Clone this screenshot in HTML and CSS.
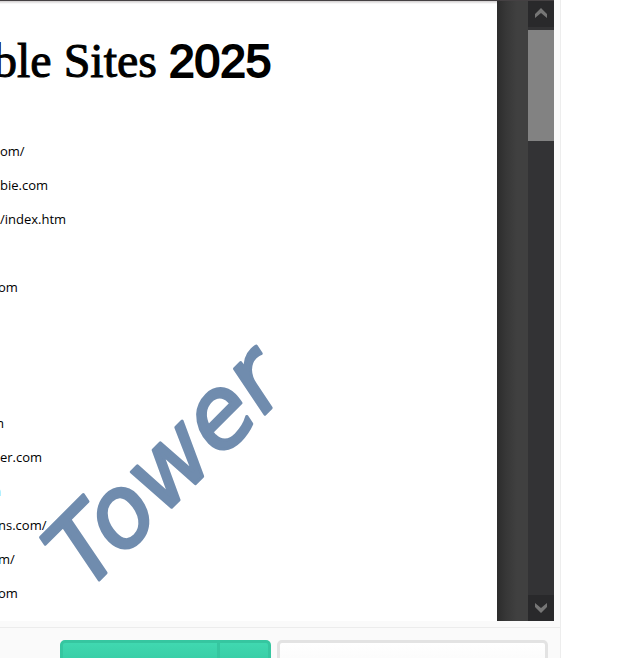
FILE: index.html
```
<!DOCTYPE html>
<html lang="en">
<head>
    <meta charset="UTF-8">
    <meta name="viewport" content="width=device-width, initial-scale=1.0">
    <title>Sites 2025</title>
    <link rel="stylesheet" href="styles.css">
</head>
<body>
    <div class="panel">
        <div class="viewer">
            <main class="page">
                <h1>ble Sites <span class="year">2025</span></h1>
                <ul class="sites">
                    <li>om/</li>
                    <li>bie.com</li>
                    <li>/index.htm</li>
                    <li></li>
                    <li class="cut">om</li>
                    <li></li>
                    <li></li>
                    <li></li>
                    <li class="cut-more">m</li>
                    <li>er.com</li>
                    <li class="cut-most"><a href="#">m</a></li>
                    <li class="cut">ns.com/</li>
                    <li class="cut">m/</li>
                    <li class="cut">om</li>
                </ul>
                <svg class="watermark" viewBox="0 0 260 260">
                    <text transform="translate(57 251) rotate(-45)">Tower</text>
                </svg>
            </main>
            <div class="edge"></div>
            <div class="scrollbar">
                <button class="scroll-button" aria-label="Scroll up">
                    <svg width="14" height="12" viewBox="0 0 14 12"><path d="M1 7 L7 1 L13 7 V11 L7 6 L1 11 Z"/></svg>
                </button>
                <div class="thumb"></div>
                <button class="scroll-button scroll-down" aria-label="Scroll down">
                    <svg width="14" height="12" viewBox="0 0 14 12"><path d="M1 2 L7 7 L13 2 V6 L7 12 L1 6 Z"/></svg>
                </button>
            </div>
        </div>
        <div class="actions">
            <div class="split">
                <button class="split-main" aria-label="Save"></button>
                <button class="split-more" aria-label="More options"></button>
            </div>
            <button class="plain" aria-label="Cancel"></button>
        </div>
    </div>
</body>
</html>
```
FILE: styles.css
```
* {
    box-sizing: border-box;
}
body {
    margin: 0;
    background: white;
    overflow: hidden;
}
button {
    padding: 0;
    border: none;
    cursor: pointer;
}
.panel {
    height: 100vh;
    margin-right: 72px;
    padding-right: 6px;
    background: #fafafa;
    border-right: 1px solid #ededed;
    overflow: hidden;
}
.viewer {
    display: flex;
    height: calc(100vh - 37px);
    border-top: 1px solid #454143;
    overflow: hidden;
}
.page {
    position: relative;
    flex: 1;
    background: linear-gradient(#d0cdce, white 3px);
}
h1 {
    margin: 0;
    padding-top: 33px;
    font: 48px/54px "Liberation Serif", serif;
    white-space: nowrap;
    text-indent: -7px;
    -webkit-text-stroke: 1px black;
}
.year {
    font-family: "Liberation Sans", sans-serif;
    font-size: 46px;
    -webkit-text-stroke: 2px black;
}
.sites {
    margin: 46px 0 0;
    padding: 0;
    list-style: none;
    font: 13px/34px "Open Sans", sans-serif;
    color: black;
}
.sites li {
    height: 34px;
}
.sites a {
    color: #1e88e5;
    text-decoration: none;
}
.cut {
    text-indent: -2px;
}
.cut-more {
    text-indent: -8px;
}
.cut-most {
    text-indent: -11px;
}
.watermark {
    position: absolute;
    left: 30px;
    top: 340px;
    width: 260px;
    height: 260px;
    overflow: visible;
}
.watermark text {
    font: italic 98px "DejaVu Sans", sans-serif;
    fill: #708cae;
    stroke: #708cae;
    stroke-width: 3px;
    stroke-linejoin: round;
}
.edge {
    width: 31px;
    background: linear-gradient(to right, #2c2c2c, #383838 10px, #404040 20px, #404040);
}
.scrollbar {
    display: flex;
    flex-direction: column;
    width: 26px;
    background: #333335;
}
.scroll-button {
    height: 26px;
    background: #29292b;
}
.scroll-button path {
    fill: #767676;
}
.scroll-down {
    margin-top: auto;
}
.thumb {
    height: 111px;
    margin-top: 3px;
    background: #828282;
}
.actions {
    display: flex;
    justify-content: flex-end;
    gap: 6px;
    margin: 6px -6px 0 0;
    padding: 12px 12px 0 0;
    border-top: 1px solid #ececec;
}
.split {
    display: flex;
    width: 211px;
    height: 48px;
}
.split button {
    border: 3px solid #36c6a0;
    background: linear-gradient(#40d8b0, #2fbf98);
}
.split .split-main {
    flex: 1;
    border-radius: 5px 0 0 5px;
}
.split .split-more {
    width: 51px;
    border-left: none;
    border-radius: 0 5px 5px 0;
}
.plain {
    width: 271px;
    height: 48px;
    border: 3px solid #e3e3e3;
    border-radius: 5px;
    background: linear-gradient(white, #f6f6f6);
}
```
